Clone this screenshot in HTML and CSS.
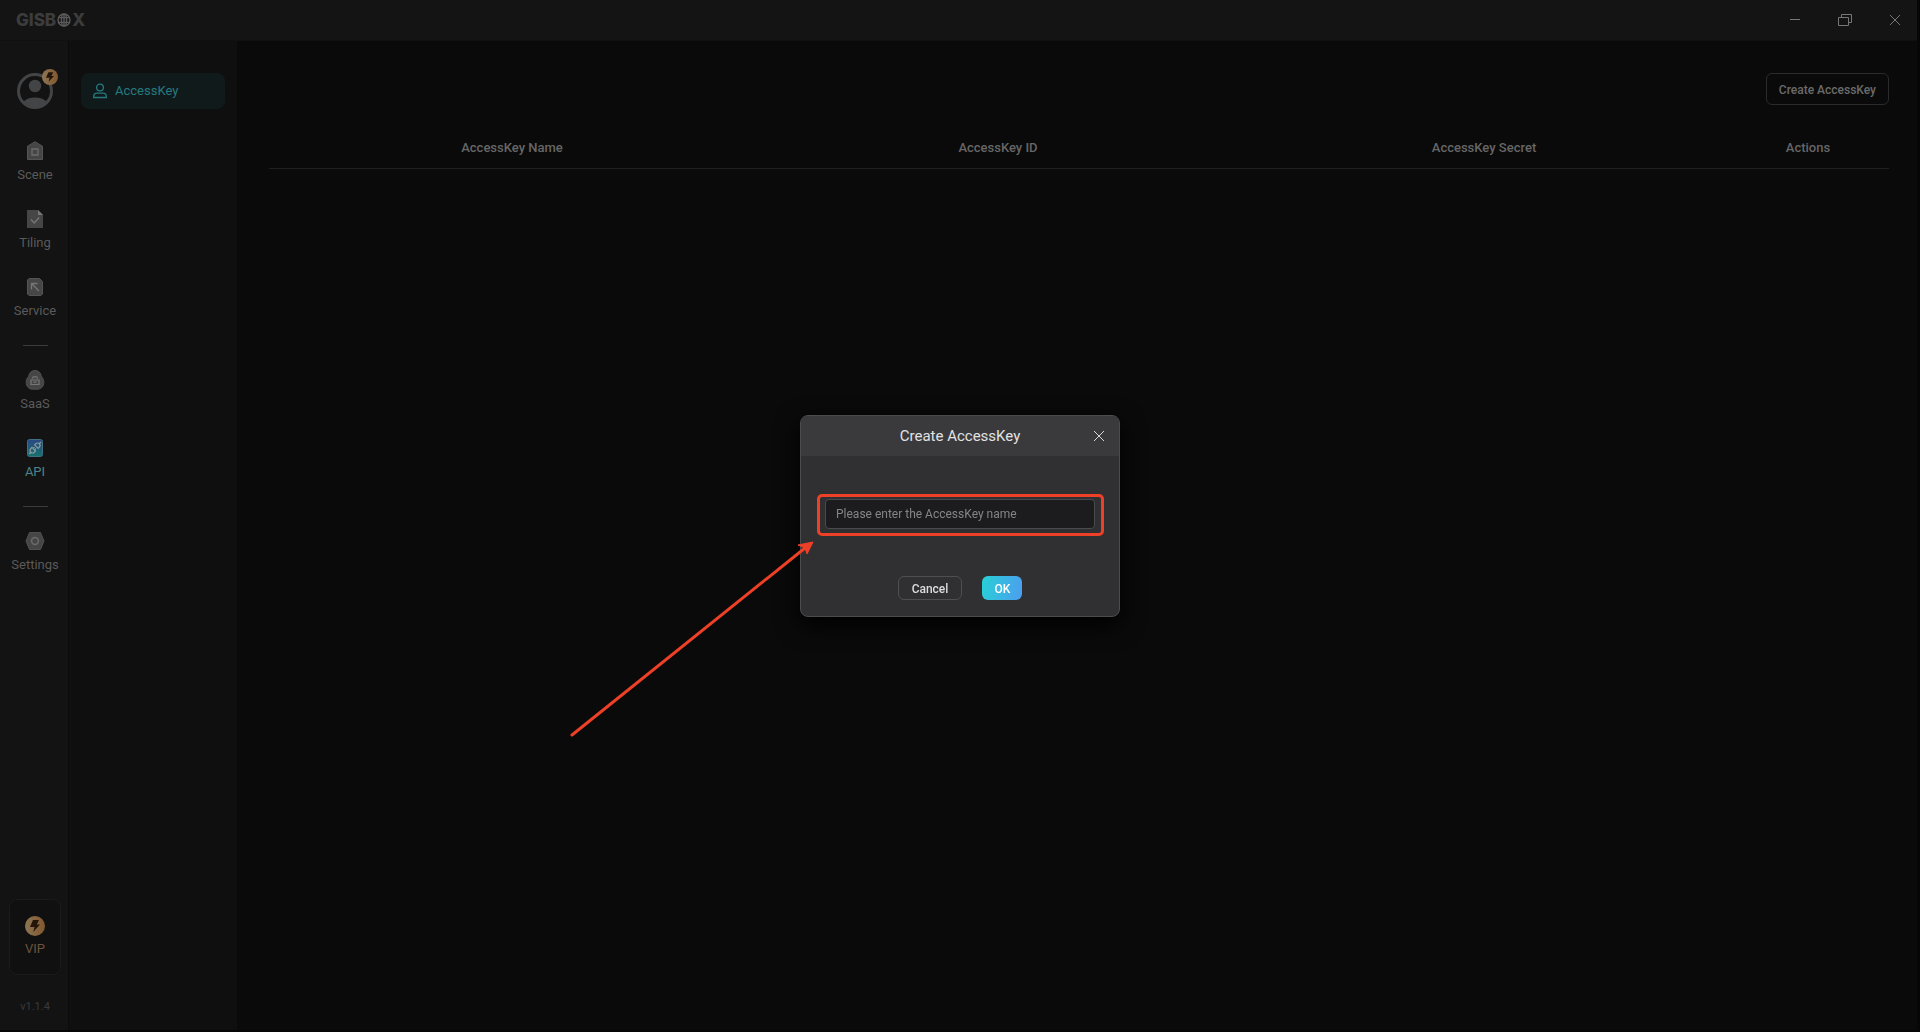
FILE: index.html
```html
<!DOCTYPE html>
<html lang="en">
<head>
  <meta charset="UTF-8">
  <meta name="viewport" content="width=device-width, initial-scale=1.0">
  <title>GISBox - AccessKey</title>
  <link rel="stylesheet" href="styles.css">
</head>
<body>
  <div class="app">
    <header class="topbar">
      <div class="logo">
        <span>GISB</span>
        <svg viewBox="0 0 14 14" width="14" height="14" aria-label="O">
          <circle cx="7" cy="7" r="6" />
          <ellipse cx="7" cy="7" rx="2.6" ry="6" />
          <path d="M7 1v12M1.6 4.6h10.8M1.6 9.4h10.8" />
        </svg>
        <span>X</span>
      </div>
      <div class="window-controls">
        <button type="button" aria-label="Minimize">
          <svg viewBox="0 0 14 14" width="14" height="14"><path d="M2 6.5h10" /></svg>
        </button>
        <button type="button" aria-label="Restore">
          <svg viewBox="0 0 14 14" width="14" height="14"><path d="M.5 4.5h10v8H.5zM3.500 4.500v-3h10v8h-3" /></svg>
        </button>
        <button type="button" aria-label="Close window">
          <svg viewBox="0 0 14 14" width="14" height="14"><path d="M2 2l10 10M12 2L2 12" /></svg>
        </button>
      </div>
    </header>

    <div class="layout">
      <aside class="sidebar">
        <button type="button" class="avatar" aria-label="Account">
          <svg viewBox="0 0 36 36" width="36" height="36">
            <circle cx="18" cy="18" r="16.5" fill="none" stroke="#434446" stroke-width="3" />
            <circle cx="18" cy="13" r="6.2" fill="#434446" />
            <path d="M6 29c3-3.200 7-4.600 12-4.600s9 1.400 12 4.600a16.500 16.500 0 0 1-24 0z" fill="#434446" />
          </svg>
          <svg class="avatar-badge" viewBox="0 0 20 20" width="16" height="16">
            <circle cx="10" cy="10" r="10" fill="url(#gold)" />
            <path d="M8 4h6l-2.200 4.600H15L8.300 16l1.200-5H5z" fill="#24150a" />
          </svg>
        </button>

        <nav class="nav">
          <a href="#scene" class="nav-item">
            <svg viewBox="0 0 20 20" width="20" height="20">
              <path d="M10 .7l7.500 4.500v13.300h-15V5.200z" fill="#464646" stroke="#545454" />
              <path d="M7 8h6v6H7z" fill="#464646" stroke="#6c6c6c" stroke-width="1.3" />
            </svg>
            <span>Scene</span>
          </a>
          <a href="#tiling" class="nav-item">
            <svg viewBox="0 0 20 20" width="20" height="20">
              <path d="M2 1h11l5 5v13H2z" fill="#464646" />
              <path d="M13 1l5 5h-5z" fill="#777" />
              <path d="M6 10.500l3.200 3.500 5-5.500" fill="none" stroke="#777" stroke-width="1.4" />
            </svg>
            <span>Tiling</span>
          </a>
          <a href="#service" class="nav-item">
            <svg viewBox="0 0 20 20" width="20" height="20">
              <path d="M4 1.500h10.500l3 3V17l-1.500 1.500H4L2.500 17V3z" fill="#464646" stroke="#545454" />
              <path d="M6.500 12.500v-6h6M7 7l7 7" fill="none" stroke="#777" stroke-width="1.3" />
            </svg>
            <span>Service</span>
          </a>
          <hr class="nav-divider">
          <a href="#saas" class="nav-item">
            <svg viewBox="0 0 20 20" width="20" height="20">
              <path d="M10 .5c3.700 0 6 2.600 6.200 5.700 1.700 1.600 2.600 3.700 2.600 6 0 4-2.600 7-6 7H7.200c-3.400 0-6-3-6-7 0-2.300.9-4.400 2.600-6C4 3.100 6.300.5 10 .5z" fill="#464646" stroke="#505050" />
              <path d="M7.200 8.500a2.900 2.400 0 0 1 5.600 0M6 10h8v4.500H6zM8.500 12.200h3" fill="none" stroke="#777" stroke-width="1.2" />
            </svg>
            <span>SaaS</span>
          </a>
          <a href="#api" class="nav-item active">
            <svg viewBox="0 0 20 20" width="20" height="20">
              <rect x="2.5" y="1.5" width="15" height="17" rx="2" fill="url(#api-fill)" stroke="#3f6f80" />
              <g transform="rotate(-45 10 10)" fill="none" stroke="#8b9a9d" stroke-width="1.2">
                <path d="M1.500 10H4M16 10h2.500M8.300 7.500v5H6.500a2.500 2.500 0 0 1 0-5zM12 7.500v5h1.500a2.500 2.500 0 0 0 0-5zM8.300 9h2M8.300 11h2" />
              </g>
            </svg>
            <span>API</span>
          </a>
          <hr class="nav-divider">
          <a href="#settings" class="nav-item">
            <svg viewBox="0 0 20 20" width="20" height="20">
              <path d="M4.500 1.500h11L19 10l-3.500 8.500h-11L1 10z" fill="#464646" stroke="#505050" />
              <circle cx="10" cy="10" r="3.4" fill="none" stroke="#6c6c6c" stroke-width="1.5" />
            </svg>
            <span>Settings</span>
          </a>
        </nav>

        <a href="#vip" class="vip">
          <svg viewBox="0 0 20 20" width="20" height="20">
            <defs>
              <linearGradient id="gold">
                <stop offset="0" stop-color="#8d7554" />
                <stop offset="1" stop-color="#82582f" />
              </linearGradient>
              <linearGradient id="api-fill" x2="0" y2="1">
                <stop offset="0" stop-color="#294786" />
                <stop offset="1" stop-color="#17716d" />
              </linearGradient>
            </defs>
            <circle cx="10" cy="10" r="10" fill="url(#gold)" />
            <path d="M8 4h6l-2.200 4.600H15L8.300 16l1.200-5H5z" fill="#24150a" />
          </svg>
          <span>VIP</span>
        </a>
        <span class="version">v1.1.4</span>
      </aside>

      <nav class="submenu">
        <a href="#accesskey" class="submenu-item">
          <svg viewBox="0 0 14 16" width="14" height="16">
            <circle cx="7" cy="4.5" r="3.4" />
            <path d="M.7 14.500v-1c0-2 1.300-3.300 3.300-3.300h6c2 0 3.300 1.300 3.300 3.300v1z" />
          </svg>
          <span>AccessKey</span>
        </a>
      </nav>

      <main class="content">
        <button type="button" class="create-btn">Create AccessKey</button>
        <table class="key-table">
          <thead>
            <tr>
              <th>AccessKey Name</th>
              <th>AccessKey ID</th>
              <th>AccessKey Secret</th>
              <th class="actions">Actions</th>
            </tr>
          </thead>
        </table>
      </main>
    </div>
  </div>

  <div class="modal">
    <form class="dialog" role="dialog" aria-labelledby="dialog-title">
      <div class="dialog-header">
        <h2 id="dialog-title">Create AccessKey</h2>
        <button type="button" class="dialog-close" aria-label="Close">
          <svg viewBox="0 0 12 12" width="12" height="12"><path d="M1 1l10 10M11 1L1 11" /></svg>
        </button>
      </div>
      <div class="dialog-body">
        <div class="field">
          <input type="text" aria-label="AccessKey name" placeholder="Please enter the AccessKey name">
        </div>
        <div class="dialog-footer">
          <button type="button" class="btn">Cancel</button>
          <button type="submit" class="btn btn-primary">OK</button>
        </div>
      </div>
      <svg class="arrow" viewBox="0 0 246 200" width="246" height="200">
        <path d="M3 198L236 11" fill="none" stroke="#ee4026" stroke-width="3" stroke-linecap="round" />
        <path d="M244 5l-6 12-2-6-7-3z" fill="#ee4026" stroke="#ee4026" />
      </svg>
    </form>
  </div>
</body>
</html>
```
FILE: styles.css
```css
* {
  box-sizing: border-box;
}
body {
  margin: 0;
  background: #060606;
  color: #5a5a5a;
  font-family: Roboto, "Liberation Sans", sans-serif;
  font-size: 13px;
  line-height: 20px;
}
button {
  font: inherit;
  color: inherit;
  background: none;
  border: none;
  padding: 0;
  cursor: pointer;
}
a {
  color: inherit;
  text-decoration: none;
}
svg {
  display: block;
}
.app {
  display: flex;
  flex-direction: column;
  min-height: 100vh;
  padding: 0 3px 2px 0;
}

/* top bar */
.topbar {
  display: flex;
  justify-content: space-between;
  align-items: center;
  height: 41px;
  padding: 0 15px 0 16px;
  background: #141414;
  border-bottom: 1px solid #101010;
}
.logo {
  display: flex;
  align-items: center;
  gap: 1px;
  color: #3c3c3c;
  font-family: Inter, sans-serif;
  font-size: 17px;
  font-weight: 800;
}
.logo svg {
  fill: none;
  stroke: #5a5a5a;
  stroke-width: 1.4;
}
.window-controls {
  display: flex;
  gap: 36px;
}
.window-controls svg {
  fill: none;
  stroke: #777;
}

/* sidebar */
.layout {
  display: flex;
  flex: 1;
}
.sidebar {
  display: flex;
  flex-direction: column;
  align-items: center;
  width: 69px;
  padding: 32px 0 13px 2px;
  background: #131313;
  border-right: 1px solid #0b0b0b;
}
.avatar {
  position: relative;
  margin-bottom: 32px;
}
.avatar-badge {
  position: absolute;
  top: -4px;
  right: -5px;
}
.nav {
  display: flex;
  flex-direction: column;
  align-items: center;
  gap: 24px;
}
.nav-item {
  display: flex;
  flex-direction: column;
  align-items: center;
  gap: 4px;
}
.nav-item.active {
  color: #4c8587;
}
.nav-divider {
  width: 25px;
  height: 1px;
  margin: 0;
  border: none;
  background: #3c3c3c;
}
.vip {
  display: flex;
  flex-direction: column;
  align-items: center;
  gap: 3px;
  width: 52px;
  height: 76px;
  margin-top: auto;
  padding-top: 16px;
  background: #101010;
  border: 1px solid #1c1a1a;
  border-radius: 8px;
  color: #6b543b;
}
.version {
  margin-top: 22px;
  color: #383a3e;
  font-size: 11px;
}

/* submenu */
.submenu {
  width: 168px;
  padding: 32px 12px;
  background: #0f0f0f;
}
.submenu-item {
  display: flex;
  align-items: center;
  gap: 8px;
  height: 36px;
  padding: 0 12px;
  background: #111a1b;
  border-radius: 8px;
  color: #257a80;
}
.submenu-item svg {
  fill: none;
  stroke: #257a80;
  stroke-width: 1.3;
}

/* content */
.content {
  flex: 1;
  padding: 32px 28px 32px 32px;
  background: #0a0a0a;
}
.create-btn {
  display: block;
  height: 32px;
  margin-left: auto;
  padding: 2px 12px 0;
  border: 1px solid #2b2b2b;
  border-radius: 6px;
  color: #6a6a6a;
  font-size: 12px;
  font-weight: 500;
}
.key-table {
  width: 100%;
  margin-top: 20px;
  border-collapse: collapse;
  table-layout: fixed;
}
.key-table th {
  width: 30%;
  padding: 13px 0 10px;
  border-bottom: 1px solid #202020;
  color: #666;
  font-weight: 500;
}
.key-table .actions {
  width: 10%;
}

/* dialog */
.modal {
  position: fixed;
  inset: 0;
  display: flex;
  align-items: center;
  justify-content: center;
}
.dialog {
  position: relative;
  width: 320px;
  background: #303032;
  border: 1px solid #4c4c4f;
  border-radius: 8px;
  box-shadow: 0 8px 24px #000;
}
.dialog-header {
  display: grid;
  grid-template-columns: 1fr auto 1fr;
  align-items: center;
  height: 40px;
  padding: 0 14px;
  background: #3a3a3c;
  border-radius: 7px 7px 0 0;
}
.dialog-header h2 {
  grid-column: 2;
  margin: 0;
  color: #e2e2e4;
  font-size: 15px;
  font-weight: 400;
}
.dialog-close {
  justify-self: end;
}
.dialog-close svg {
  stroke: #d8d8d8;
}
.dialog-body {
  padding: 43px 24px 16px;
}
.field {
  position: relative;
}
.field::after {
  content: "";
  position: absolute;
  inset: -5px -9px -7px -8px;
  border: 3px solid #ee4026;
  border-radius: 5px;
  pointer-events: none;
}
.field input {
  display: block;
  width: 100%;
  height: 30px;
  padding: 0 10px;
  background: #1c1c1e;
  border: 1px solid #4a4a4d;
  border-radius: 4px;
  color: #ddd;
  font: inherit;
  font-size: 12px;
}
.field input::placeholder {
  color: #858587;
}
.dialog-footer {
  display: flex;
  justify-content: center;
  gap: 20px;
  margin-top: 47px;
}
.btn {
  min-width: 40px;
  height: 24px;
  padding: 2px 13px 0;
  border: 1px solid #4f4f52;
  border-radius: 6px;
  color: #dcdcdc;
  font-size: 12px;
  font-weight: 500;
}
.btn-primary {
  padding: 2px 11px 0;
  border: none;
  background: linear-gradient(100deg, #27d0d6, #4d9df0);
  color: #fff;
}
.arrow {
  position: absolute;
  top: 121px;
  left: -232px;
  pointer-events: none;
}
```
